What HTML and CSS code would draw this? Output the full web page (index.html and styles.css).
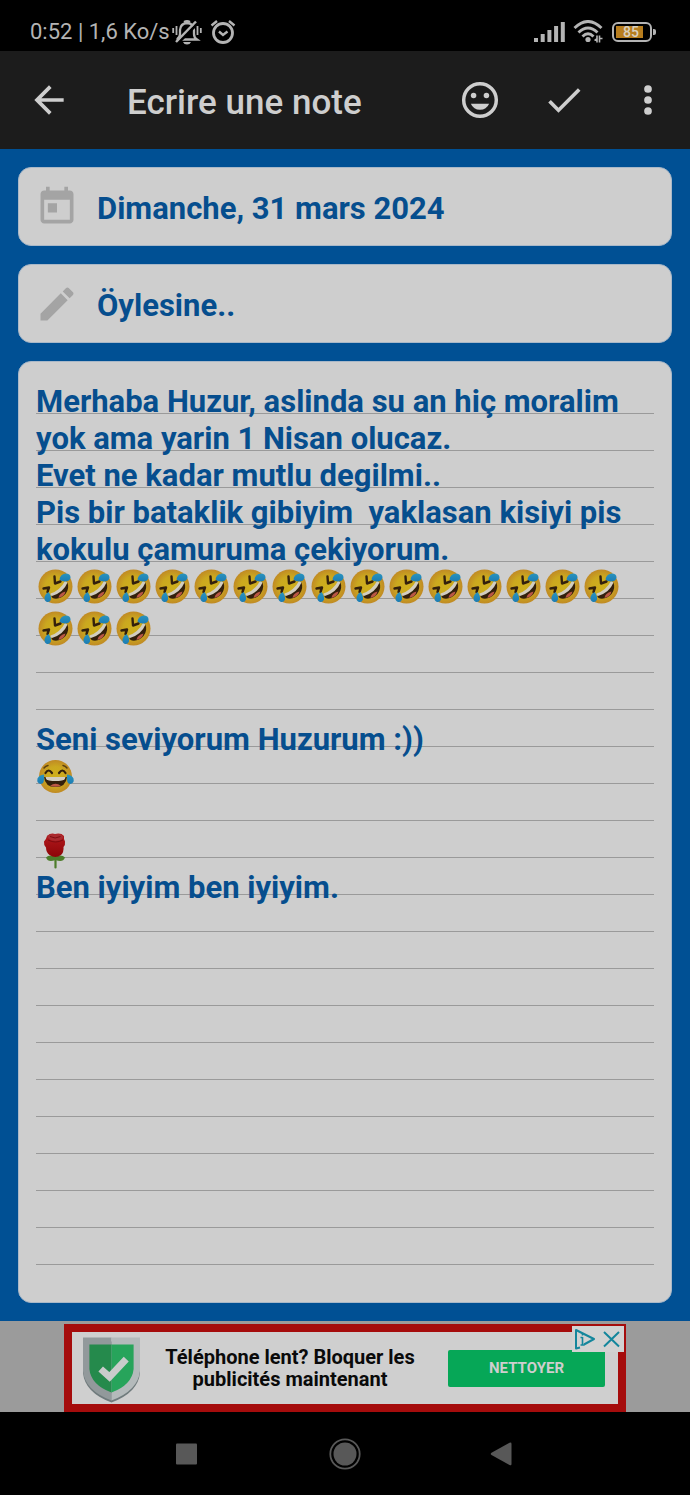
FILE: index.html
```html
<!DOCTYPE html>
<html lang="fr">
<head>
  <meta charset="UTF-8" />
  <meta name="viewport" content="width=device-width, initial-scale=1.0"/>
  <title>Ecrire une note</title>
  <link rel="stylesheet" href="styles.css">
</head>
<body>
  <!-- emoji used in the note -->
  <svg class="sprite" aria-hidden="true">
    <defs>
      <radialGradient id="face">
        <stop offset="0" stop-color="#cfb01c"/>
        <stop offset="0.6" stop-color="#cba81f"/>
        <stop offset="1" stop-color="#c08a24"/>
      </radialGradient>
      <linearGradient id="tear" x1="0" y1="0" x2="0" y2="1">
        <stop offset="0" stop-color="#2a93bd"/>
        <stop offset="1" stop-color="#1b7db5"/>
      </linearGradient>
      <linearGradient id="petal" x1="0" y1="0" x2="0" y2="1">
        <stop offset="0" stop-color="#b41a1e"/>
        <stop offset="1" stop-color="#8d0508"/>
      </linearGradient>
    </defs>
    <symbol id="rofl" viewBox="0 0 39 37">
      <circle cx="19.5" cy="18.5" r="17" fill="url(#face)"/>
      <path d="M15.500 27Q26 24 31 13.500Q34 20 29.500 26Q24.500 31.500 18 30.500Q15 29.500 15.500 27Z" fill="#33200c"/>
      <path d="M14.500 25.500Q24 22.500 29 13L31.500 14.500Q27.500 24.500 16 28Q14 27.500 14.500 25.500Z" fill="#d2cdc0"/>
      <path d="M22.500 30Q23 25 29.500 23.500Q28.500 28.500 22.500 30Z" fill="#bb5745"/>
      <path d="M18.500 8.500L19 15.500L24.500 13.500" fill="none" stroke="#33200c" stroke-width="2.400" stroke-linecap="round" stroke-linejoin="round"/>
      <path d="M7.500 20.500L13 19.500L11.500 24" fill="none" stroke="#33200c" stroke-width="2.400" stroke-linecap="round" stroke-linejoin="round"/>
      <path d="M23.500 11.500Q24 6.500 29.500 5.500Q34.500 5.500 34.500 9.500Q34 13.500 29 13.500Q25.500 13.500 23.500 11.500Z" fill="url(#tear)"/>
      <path d="M12.500 24Q15.500 27.500 15 31.500Q14 34.500 11 34Q8 33 8.500 29Q9.500 25.500 12.500 24Z" fill="url(#tear)"/>
    </symbol>
    <symbol id="joy" viewBox="0 0 39 37">
      <circle cx="19.500" cy="18.500" r="16.500" fill="url(#face)"/>
      <path d="M8 19H31Q30 29 19.500 29Q9 29 8 19Z" fill="#33200c"/>
      <path d="M9.500 19H29.500Q29 22 26 22.500Q19.500 23.500 13 22.500Q10 22 9.500 19Z" fill="#d2cdc0"/>
      <path d="M14 28Q19.500 23.500 25 28Q19.500 29.500 14 28Z" fill="#bb5745"/>
      <path d="M9.500 15Q12.500 10 16 15M23 15Q26.500 10 29.500 15" fill="none" stroke="#33200c" stroke-width="2.200" stroke-linecap="round"/>
      <path d="M8 10Q9.500 8 12 7.500M27 7.500Q29.500 8 31 10" fill="none" stroke="#5a4010" stroke-width="1.500" stroke-linecap="round"/>
      <path d="M8 16.500Q9 26 4.500 26Q0.500 25 1.500 20.500Q3 17 8 16.500Z" fill="url(#tear)"/>
      <path d="M31 16.500Q30 26 34.500 26Q38.500 25 37.500 20.500Q36 17 31 16.500Z" fill="url(#tear)"/>
    </symbol>
    <symbol id="rose" viewBox="0 0 39 37">
      <path d="M19.500 22V35.500" stroke="#4d7d2b" stroke-width="2.200" stroke-linecap="round"/>
      <path d="M19.500 28Q12 31 10 25.500Q13 22 19.500 24.500Q26 22 29 25.500Q27 31 19.500 28Z" fill="#4d7d2b"/>
      <path d="M8 9.500Q10 8 11 4Q15 0.500 19 2Q25 0.500 28 4Q27.500 8 29 9.500Q29.500 13 27.500 15Q28 20 25 23Q19.500 27 13.500 23Q10 20 10 15.500Q7.500 12.500 8 9.500Z" fill="url(#petal)"/>
      <path d="M11 4Q15 1 19 2.500Q25 1 27.500 4.500Q27 8.500 19.500 9Q12.500 8.500 11 4Z" fill="#a92b2f"/>
      <path d="M14 4.500Q19 7.500 24.500 4.500M12 8Q19.500 12 27 8" fill="none" stroke="#7d0b10" stroke-width="1"/>
    </symbol>
  </svg>

  <div class="status-bar">
    <span class="status-text">0:52 | 1,6 Ko/s</span>
    <svg class="icon-mute" viewBox="0 0 30 26" fill="none" stroke="#b4b4b4" stroke-width="2.300">
      <path d="M4.500 20.500H25Q22 18.500 22 15V11.500Q22 4.500 15 4Q8.500 4.500 8 11V15Q8 18 5 20.500"/>
      <path d="M12 3Q15 1.500 18 3"/>
      <path d="M11 23H19Q18 25.500 15 25.500Q12 25.500 11 23Z" fill="#b4b4b4" stroke="none"/>
      <path d="M6.500 23.500L26 4" stroke="#000" stroke-width="3"/>
      <path d="M4 23L24 2.500" stroke-width="2.500"/>
      <path d="M1.200 9V14M4.500 7V16M25.500 7V16M28.800 9V14" stroke-width="1.800"/>
    </svg>
    <svg class="icon-alarm" viewBox="0 0 26 26" fill="none" stroke="#b4b4b4" stroke-width="2.800">
      <circle cx="13" cy="14" r="9.500"/>
      <path d="M1.500 6.500L7 2M24.500 6.500L19 2" stroke-width="2.400"/>
      <path d="M9 12.500L13 16L17.500 12.500" stroke-width="2.400"/>
    </svg>
    <span class="spacer"></span>
    <svg class="icon-signal" viewBox="0 0 31 20" stroke="#b4b4b4" stroke-width="4">
      <path d="M2 20V16M8.700 20V12M15.400 20V8M22.100 20V4M28.800 20V0"/>
    </svg>
    <svg class="icon-wifi" viewBox="0 0 30 23" fill="none" stroke="#b4b4b4" stroke-width="2.900">
      <path d="M1.500 8Q15 -5 28.500 8M5.500 12.500Q15 3.500 24.500 12.500M9.500 16.500Q15 11 20.500 16.500"/>
      <circle cx="15" cy="19.500" r="2.600" fill="#b4b4b4" stroke="none"/>
      <path d="M24 15.500V22.500M26.500 15.500V22.500M24 18.500L21.500 20.500M26.500 18.500H29.500" stroke-width="1.600"/>
    </svg>
    <div class="battery"><span class="battery-level">85</span></div>
  </div>

  <header class="app-bar">
    <button class="icon-btn back-btn" type="button" aria-label="Retour">
      <svg class="icon" viewBox="0 0 24 24"><path d="M20 11H7.830l5.590-5.590L12 4l-8 8 8 8 1.410-1.410L7.830 13H20v-2z"/></svg>
    </button>
    <h1>Ecrire une note</h1>
    <button class="icon-btn" type="button" aria-label="Emoji">
      <svg class="icon" viewBox="0 0 24 24">
        <circle cx="12" cy="12" r="8.900" fill="none" stroke="#cecece" stroke-width="1.900"/>
        <circle cx="8.500" cy="9.500" r="1.500"/>
        <circle cx="15.500" cy="9.500" r="1.500"/>
        <path d="M7 14H17Q15.500 17.300 12 17.300Q8.500 17.300 7 14Z"/>
      </svg>
    </button>
    <button class="icon-btn" type="button" aria-label="Enregistrer">
      <svg class="icon" viewBox="0 0 24 24"><path d="M9 16.170L4.830 12l-1.420 1.410L9 19 21 7l-1.410-1.410z"/></svg>
    </button>
    <button class="icon-btn" type="button" aria-label="Menu">
      <svg class="icon" viewBox="0 0 24 24"><circle cx="12" cy="6" r="2.100"/><circle cx="12" cy="12" r="2.100"/><circle cx="12" cy="18" r="2.100"/></svg>
    </button>
  </header>

  <main class="note-form">
    <div class="card field">
      <label for="date" aria-label="Date">
        <svg class="icon" viewBox="0 0 24 24"><path d="M19 3h-1V1h-2v2H8V1H6v2H5c-1.110 0-1.990.900-1.990 2L3 19c0 1.100.890 2 2 2h14c1.100 0 2-.900 2-2V5c0-1.100-.900-2-2-2zm0 16H5V8h14v11zM7 10h5v5H7z"/></svg>
      </label>
      <input type="text" id="date" name="date" value="Dimanche, 31 mars 2024" />
    </div>

    <div class="card field">
      <label for="title" aria-label="Titre">
        <svg class="icon" viewBox="0 0 24 24"><path d="M3 17.250V21h3.750L17.810 9.940l-3.750-3.750L3 17.250zM20.710 7.040c.390-.390.390-1.020 0-1.410l-2.340-2.340c-.390-.390-1.020-.390-1.410 0l-1.830 1.830 3.750 3.750 1.830-1.830z"/></svg>
      </label>
      <input type="text" id="title" name="title" value="Öylesine.." />
    </div>

    <div class="card note">
      <div class="note-text" contenteditable="true" role="textbox" aria-multiline="true" aria-label="Note" spellcheck="false" lang="tr">
        <p>Merhaba Huzur, aslinda su an hiç moralim yok ama yarin 1 Nisan olucaz.</p>
        <p>Evet ne kadar mutlu degilmi..</p>
        <p>Pis bir bataklik gibiyim&nbsp; yaklasan kisiyi pis kokulu çamuruma çekiyorum.</p>
        <p class="emoji-row">
          <svg class="emoji"><use href="#rofl"/></svg>
          <svg class="emoji"><use href="#rofl"/></svg>
          <svg class="emoji"><use href="#rofl"/></svg>
          <svg class="emoji"><use href="#rofl"/></svg>
          <svg class="emoji"><use href="#rofl"/></svg>
          <svg class="emoji"><use href="#rofl"/></svg>
          <svg class="emoji"><use href="#rofl"/></svg>
          <svg class="emoji"><use href="#rofl"/></svg>
          <svg class="emoji"><use href="#rofl"/></svg>
          <svg class="emoji"><use href="#rofl"/></svg>
          <svg class="emoji"><use href="#rofl"/></svg>
          <svg class="emoji"><use href="#rofl"/></svg>
          <svg class="emoji"><use href="#rofl"/></svg>
          <svg class="emoji"><use href="#rofl"/></svg>
          <svg class="emoji"><use href="#rofl"/></svg>
          <svg class="emoji"><use href="#rofl"/></svg>
          <svg class="emoji"><use href="#rofl"/></svg>
          <svg class="emoji"><use href="#rofl"/></svg>
        </p>
        <p><br></p>
        <p><br></p>
        <p>Seni seviyorum Huzurum :))</p>
        <p class="emoji-row"><svg class="emoji"><use href="#joy"/></svg></p>
        <p><br></p>
        <p class="emoji-row"><svg class="emoji"><use href="#rose"/></svg></p>
        <p>Ben iyiyim ben iyiyim.</p>
      </div>
    </div>
  </main>

  <aside class="ad-strip">
    <div class="ad">
      <svg class="shield" viewBox="0 0 58 66">
        <path d="M0 4V36Q2 56 29 66Q56 56 58 36V4Z" fill="#6f7a7c"/>
        <path d="M0 0H29V64Q2 54 0 34Z" fill="#92999b"/>
        <path d="M29 0H58V34Q56 54 29 64Z" fill="#b4babb"/>
        <path d="M6.500 7H29V56Q8 48 6.500 32Z" fill="#258a4c"/>
        <path d="M29 7H51.500V32Q50 48 29 56Z" fill="#27a45b"/>
        <path d="M18 32L27 40L44 22" fill="none" stroke="#c9cccb" stroke-width="7"/>
      </svg>
      <p class="ad-title">Téléphone lent? Bloquer les publicités maintenant</p>
      <button class="ad-btn" type="button">NETTOYER</button>
      <div class="ad-choices">
        <svg viewBox="0 0 52 26" fill="none" stroke="#14869c" stroke-width="2">
          <path d="M8 21.500L4 22.500V4L22 13L12 18.500" stroke-linejoin="round"/>
          <path d="M10.500 11V19M10.500 7.500V9.500M8.500 19H12.500M8.500 11.500H10.500" stroke-width="1.600"/>
          <path d="M32 6L47 20.500M47 6L32 20.500"/>
        </svg>
      </div>
    </div>
  </aside>

  <nav class="nav-bar">
    <button type="button" aria-label="Applications récentes">
      <svg viewBox="0 0 32 32"><rect x="6" y="5.500" width="21" height="21" rx="1"/></svg>
    </button>
    <button type="button" aria-label="Accueil">
      <svg viewBox="0 0 32 32"><circle cx="16" cy="16" r="11.500"/><circle cx="16" cy="16" r="14.700" fill="none" stroke="#585858" stroke-width="1.800"/></svg>
    </button>
    <button type="button" aria-label="Retour">
      <svg viewBox="0 0 32 32"><path d="M3.500 14.800L21.500 4.800Q23.500 4 23.500 6V26Q23.500 28 21.500 27L3.500 17Q2 16 3.500 14.800Z"/></svg>
    </button>
  </nav>
</body>
</html>
```

FILE: styles.css
```css
:root {
  --blue: #005094;
  --text-blue: #064e8e;
  --paper: #cecece;
  --rule: #9a9a9a;
  --status: #b4b4b4;
}

* {
  box-sizing: border-box;
}

body {
  font-family: Roboto, 'Noto Sans', sans-serif;
  background: #000;
  margin: 0;
  min-height: 100vh;
  display: flex;
  flex-direction: column;
}

h1, p {
  margin: 0;
}

button {
  font-family: inherit;
  background: none;
  border: none;
  padding: 0;
  cursor: pointer;
}

svg {
  display: block;
}

.sprite {
  position: absolute;
  width: 0;
  height: 0;
}

.icon {
  width: 44px;
  height: 44px;
  fill: currentColor;
}

/* status bar */
.status-bar {
  display: flex;
  align-items: center;
  height: 51px;
  padding: 12px 38px 0 30px;
  color: var(--status);
}

.status-text {
  font-size: 22px;
  line-height: 26px;
}

.icon-mute {
  width: 30px;
  height: 26px;
  margin: 0 8px 0 2px;
}

.icon-alarm {
  width: 26px;
  height: 26px;
}

.spacer {
  flex: 1;
}

.icon-signal {
  width: 31px;
  height: 20px;
}

.icon-wifi {
  width: 30px;
  height: 23px;
  margin: 0 9px 0 8px;
}

.battery {
  position: relative;
  width: 40px;
  height: 20px;
  padding: 2px;
  border: 2px solid var(--status);
  border-radius: 6px;
}

.battery::after {
  content: "";
  position: absolute;
  top: 5px;
  right: -6px;
  width: 3px;
  height: 6px;
  border-radius: 0 2px 2px 0;
  background: var(--status);
}

.battery-level {
  display: block;
  height: 12px;
  padding-left: 7px;
  font-size: 14px;
  line-height: 12px;
  font-weight: 500;
  color: #d8d0c0;
  background: linear-gradient(to right, #b77d1e 85%, transparent 85%);
}

/* app bar */
.app-bar {
  display: flex;
  align-items: center;
  height: 98px;
  background: #1c1c1c;
  color: var(--paper);
}

.app-bar h1 {
  flex: 1;
  padding: 6px 0 0 29px;
  font-size: 35px;
  line-height: 42px;
  font-weight: 500;
}

.icon-btn {
  display: flex;
  justify-content: center;
  width: 84px;
  color: inherit;
}

.back-btn {
  width: 98px;
}

/* note */
.note-form {
  flex: 1;
  display: flex;
  flex-direction: column;
  gap: 18px;
  padding: 18px;
  background: var(--blue);
}

.card {
  background: var(--paper);
  border: 1px solid #a9b8c8;
  border-radius: 13px;
}

.field {
  display: flex;
  align-items: center;
  gap: 18px;
  height: 79px;
  padding: 0 16px;
  color: #a4a4a4;
}

.field input {
  flex: 1;
  min-width: 0;
  padding: 3px 0 0;
  border: none;
  outline: none;
  background: none;
  font-family: inherit;
  font-size: 31px;
  font-weight: 700;
  color: var(--text-blue);
}

.note {
  flex: 1;
  display: flex;
  padding: 21px 17px 17px;
}

.note-text {
  flex: 1;
  outline: none;
  font-size: 31px;
  line-height: 37px;
  font-weight: 700;
  color: var(--text-blue);
  background: repeating-linear-gradient(transparent 0 30px, var(--rule) 30px 31px, transparent 31px 37px);
}

.emoji-row {
  display: flex;
  flex-wrap: wrap;
  row-gap: 5px;
}

.emoji {
  width: 39px;
  height: 37px;
}

/* advert */
.ad-strip {
  display: flex;
  justify-content: center;
  padding-top: 3px;
  background: #9b9b9b;
}

.ad {
  position: relative;
  display: flex;
  align-items: center;
  width: 562px;
  height: 88px;
  padding: 0 13px 0 11px;
  border: 8px solid #a50c0c;
  background: #cfcfcf;
}

.shield {
  width: 57px;
  height: 66px;
  margin-top: 4px;
}

.ad-title {
  flex: 1;
  padding: 0 28px 0 20px;
  font-size: 20px;
  line-height: 22px;
  font-weight: 700;
  text-align: center;
  color: #0a0a0a;
}

.ad-btn {
  width: 157px;
  height: 37px;
  border-radius: 2px;
  font-size: 15px;
  font-weight: 700;
  color: var(--paper);
  background: #06a757;
}

.ad-choices {
  position: absolute;
  top: -6px;
  right: -6px;
  width: 52px;
  height: 26px;
  background: #d2d2d2;
}

/* system navigation */
.nav-bar {
  display: flex;
  justify-content: center;
  height: 83px;
}

.nav-bar button {
  display: flex;
  align-items: center;
  justify-content: center;
  width: 159px;
}

.nav-bar svg {
  width: 32px;
  height: 32px;
  fill: #585858;
}
```
